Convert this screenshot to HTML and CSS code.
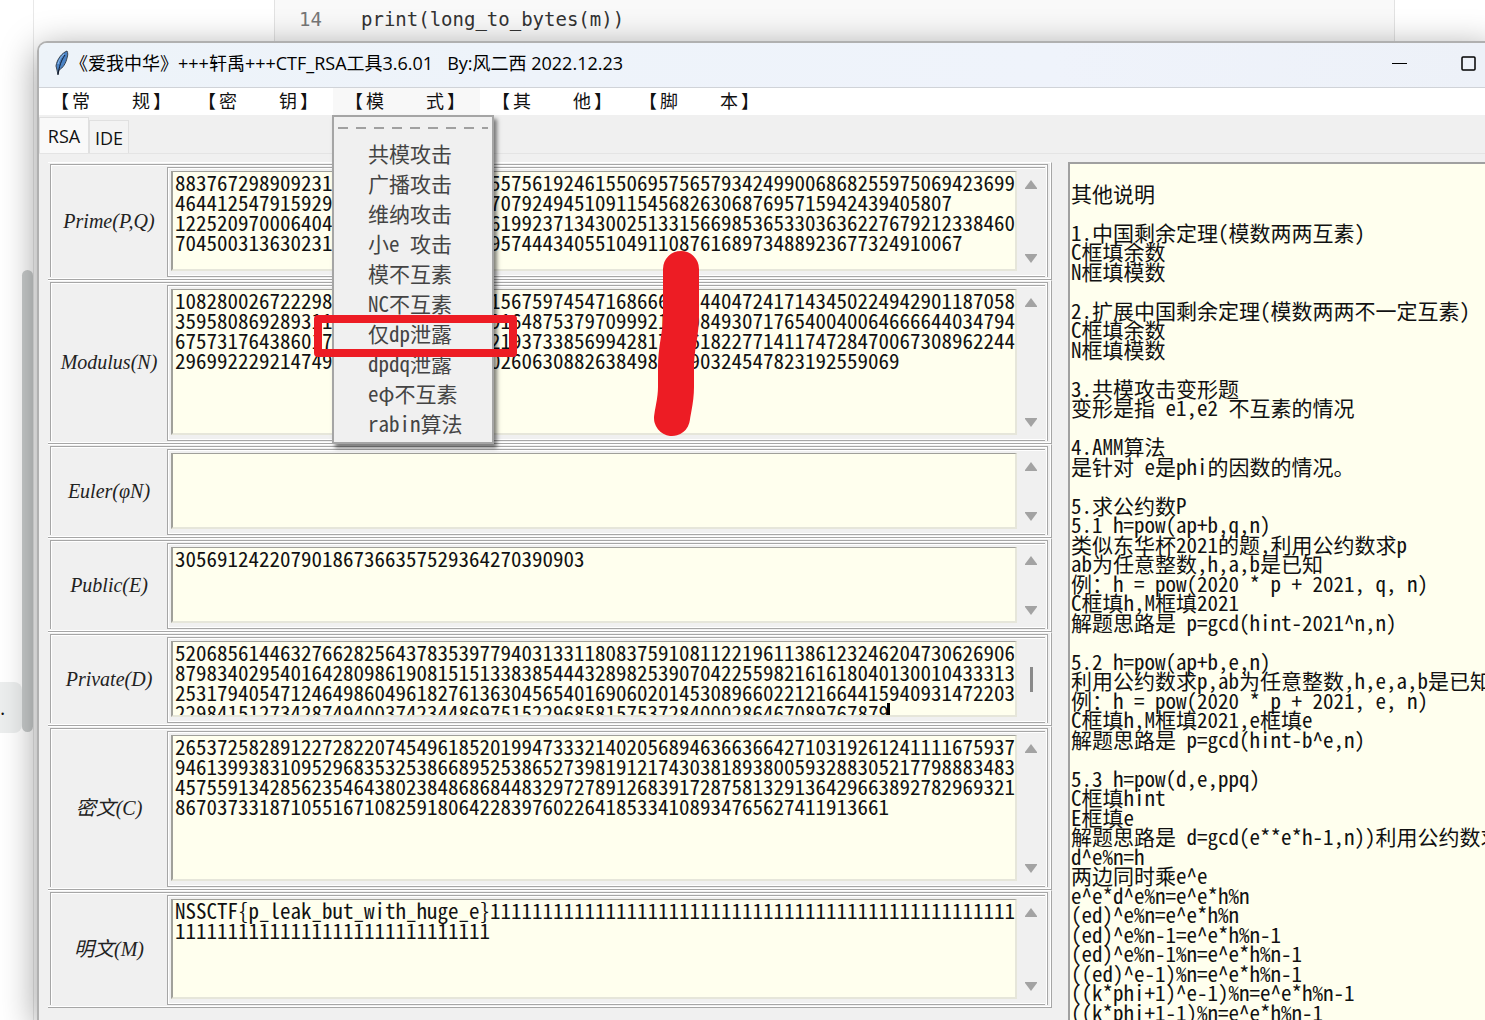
FILE: index.html
```html
<!DOCTYPE html>
<html lang="zh-CN">
<head>
<meta charset="utf-8">
<title>CTF_RSA工具3.6.01</title>
<link rel="stylesheet" href="styles.css">
</head>
<body>
<div class="backdrop">
  <div class="rail"><span class="rail-chip">.</span><span class="rail-thumb"></span></div>
  <pre class="code"><span class="code-no">14</span><code>print(long_to_bytes(m))</code></pre>
</div>

<main class="window">
  <header class="titlebar">
    <svg class="feather" viewBox="0 0 16 26" aria-hidden="true">
      <path d="M13 1C8 3 3 9 2 16l1 4 1 5 1-5c4-2 7-7 8-12 1-3 1-5 0-7z" fill="#4a82c4" stroke="#39434f"/>
      <path d="M11 5C9 8 6 12 4 24" fill="none" stroke="#10192c"/>
      <path d="M10 4C7 7 5 10 4 14" fill="none" stroke="#8fbcec"/>
    </svg>
    <h1 class="title">《爱我中华》+++轩禹+++CTF_RSA工具3.6.01 &nbsp; By:风二西 2022.12.23</h1>
    <div class="controls">
      <button type="button" aria-label="最小化"><svg viewBox="0 0 16 16"><path d="M0 8.500h15" stroke="#000" fill="none"/></svg></button>
      <button type="button" aria-label="最大化"><svg viewBox="0 0 16 16"><rect x="1" y="2" width="13" height="13" rx="1" stroke="#000" stroke-width="1.500" fill="none"/></svg></button>
    </div>
  </header>

  <nav class="menubar">
    <button type="button"><span>【</span><span class="word"><span>常</span><span>规</span></span><span>】</span></button>
    <button type="button"><span>【</span><span class="word"><span>密</span><span>钥</span></span><span>】</span></button>
    <div class="menu-host">
      <button type="button" class="open" aria-expanded="true"><span>【</span><span class="word"><span>模</span><span>式</span></span><span>】</span></button>
      <div class="dropdown">
        <div class="tearoff"></div>
        <button type="button">共模攻击</button>
        <button type="button">广播攻击</button>
        <button type="button">维纳攻击</button>
        <button type="button">小e 攻击</button>
        <button type="button">模不互素</button>
        <button type="button">NC不互素</button>
        <button type="button">仅dp泄露</button>
        <button type="button">dpdq泄露</button>
        <button type="button">eφ不互素</button>
        <button type="button">rabin算法</button>
      </div>
    </div>
    <button type="button"><span>【</span><span class="word"><span>其</span><span>他</span></span><span>】</span></button>
    <button type="button"><span>【</span><span class="word"><span>脚</span><span>本</span></span><span>】</span></button>
  </nav>

  <div class="tabs">
    <button type="button" class="tab active">RSA</button>
    <button type="button" class="tab">IDE</button>
  </div>

  <div class="content">
    <form class="fields">
      <div class="row">
        <div class="body">
          <label for="p">Prime(P,Q)</label>
          <div class="frame">
            <textarea id="p" class="mid" spellcheck="false">88376729890923147301295836401755756192461550695756579342499006868255975069423699
46441254791592983016472951038470792494510911545682630687695715942439405807
12252097000640429583710462957361992371343002513315669853653303636227679212338460
704500313630231640182957301846957444340551049110876168973488923677324910067</textarea>
            <div class="scroll"><svg viewBox="0 0 12 9"><path d="M6 0l6 8v1H0V8z"/></svg><svg viewBox="0 0 12 9"><path d="M6 9l6-8V0H0v1z"/></svg></div>
          </div>
        </div>
      </div>
      <div class="row">
        <div class="body">
          <label for="n">Modulus(N)</label>
          <div class="frame">
            <textarea id="n" class="tall" spellcheck="false">10828002672229837401956283047115675974547168666203440472417143450224942901187058
35958086928931157302846193750291648753797099921230849307176540040064666644034794
67573176438601729401857360284721937338569942817306182277141174728470067308962244
296992229214749501836274950138026063088263849815790324547823192559069</textarea>
            <div class="scroll"><svg viewBox="0 0 12 9"><path d="M6 0l6 8v1H0V8z"/></svg><svg viewBox="0 0 12 9"><path d="M6 9l6-8V0H0v1z"/></svg></div>
          </div>
        </div>
      </div>
      <div class="row">
        <div class="body">
          <label for="phi">Euler(φN)</label>
          <div class="frame">
            <textarea id="phi" class="short" spellcheck="false"></textarea>
            <div class="scroll"><svg viewBox="0 0 12 9"><path d="M6 0l6 8v1H0V8z"/></svg><svg viewBox="0 0 12 9"><path d="M6 9l6-8V0H0v1z"/></svg></div>
          </div>
        </div>
      </div>
      <div class="row">
        <div class="body">
          <label for="e">Public(E)</label>
          <div class="frame">
            <textarea id="e" class="short" spellcheck="false">305691242207901867366357529364270390903</textarea>
            <div class="scroll"><svg viewBox="0 0 12 9"><path d="M6 0l6 8v1H0V8z"/></svg><svg viewBox="0 0 12 9"><path d="M6 9l6-8V0H0v1z"/></svg></div>
          </div>
        </div>
      </div>
      <div class="row">
        <div class="body">
          <label for="d">Private(D)</label>
          <div class="frame">
            <textarea id="d" class="short" spellcheck="false">52068561446327662825643783539779403133118083759108112219611386123246204730626906
87983402954016428098619081515133838544432898253907042255982161618040130010433313
25317940547124649860496182761363045654016906020145308966022121664415940931472203
22984151273428749400374234486975152296858157537284000286467089767879</textarea>
            <span class="caret"></span>
            <div class="scroll dragging"><span class="thumb"></span></div>
          </div>
        </div>
      </div>
      <div class="row">
        <div class="body">
          <label for="c">密文(C)</label>
          <div class="frame">
            <textarea id="c" class="tall" spellcheck="false">26537258289122728220745496185201994733321402056894636636642710319261241111675937
94613993831095296835325386689525386527398191217430381893800593288305217798883483
45755913428562354643802384868684483297278912683917287581329136429663892782969321
86703733187105516710825918064228397602264185334108934765627411913661</textarea>
            <div class="scroll"><svg viewBox="0 0 12 9"><path d="M6 0l6 8v1H0V8z"/></svg><svg viewBox="0 0 12 9"><path d="M6 9l6-8V0H0v1z"/></svg></div>
          </div>
        </div>
      </div>
      <div class="row">
        <div class="body">
          <label for="m">明文(M)</label>
          <div class="frame">
            <textarea id="m" class="mid" spellcheck="false">NSSCTF{p_leak_but_with_huge_e}11111111111111111111111111111111111111111111111111
111111111111111111111111111111</textarea>
            <div class="scroll"><svg viewBox="0 0 12 9"><path d="M6 0l6 8v1H0V8z"/></svg><svg viewBox="0 0 12 9"><path d="M6 9l6-8V0H0v1z"/></svg></div>
          </div>
        </div>
      </div>
    </form>

    <section class="notes">
      <p></p>
      <p>其他说明</p>
      <p></p>
      <p>1.中国剩余定理(模数两两互素)</p>
      <p>C框填余数</p>
      <p>N框填模数</p>
      <p></p>
      <p>2.扩展中国剩余定理(模数两两不一定互素)</p>
      <p>C框填余数</p>
      <p>N框填模数</p>
      <p></p>
      <p>3.共模攻击变形题</p>
      <p>变形是指 e1,e2 不互素的情况</p>
      <p></p>
      <p>4.AMM算法</p>
      <p>是针对 e是phi的因数的情况。</p>
      <p></p>
      <p>5.求公约数P</p>
      <p>5.1 h=pow(ap+b,q,n)</p>
      <p>类似东华杯2021的题,利用公约数求p</p>
      <p>ab为任意整数,h,a,b是已知</p>
      <p>例：h = pow(2020 * p + 2021, q, n)</p>
      <p>C框填h,M框填2021</p>
      <p>解题思路是 p=gcd(hint-2021^n,n)</p>
      <p></p>
      <p>5.2 h=pow(ap+b,e,n)</p>
      <p>利用公约数求p,ab为任意整数,h,e,a,b是已知</p>
      <p>例：h = pow(2020 * p + 2021, e, n)</p>
      <p>C框填h,M框填2021,e框填e</p>
      <p>解题思路是 p=gcd(hint-b^e,n)</p>
      <p></p>
      <p>5.3 h=pow(d,e,ppq)</p>
      <p>C框填hint</p>
      <p>E框填e</p>
      <p>解题思路是 d=gcd(e**e*h-1,n))利用公约数求</p>
      <p>d^e%n=h</p>
      <p>两边同时乘e^e</p>
      <p>e^e*d^e%n=e^e*h%n</p>
      <p>(ed)^e%n=e^e*h%n</p>
      <p>(ed)^e%n-1=e^e*h%n-1</p>
      <p>(ed)^e%n-1%n=e^e*h%n-1</p>
      <p>((ed)^e-1)%n=e^e*h%n-1</p>
      <p>((k*phi+1)^e-1)%n=e^e*h%n-1</p>
      <p>((k*phi+1-1)%n=e^e*h%n-1</p>
    </section>
  </div>
</main>

<div class="mark-box"></div>
<svg class="mark-stroke" viewBox="0 0 50 190" aria-hidden="true">
  <path d="M31 20V66C31 88 26 96 26 118V138C26 152 23 160 22 169" fill="none" stroke="#ed1c24" stroke-width="36" stroke-linecap="round"/>
</svg>
</body>
</html>
```
FILE: styles.css
```css
* { box-sizing: border-box; }

html, body { height: 100%; }

body {
  position: relative;
  margin: 0;
  overflow: hidden;
  background: #fff;
  color: #111;
  font-family: "Open Sans", "Noto Sans CJK SC", sans-serif;
}

button {
  margin: 0;
  padding: 0;
  border: 0;
  background: none;
  color: inherit;
  font: inherit;
}

/* page behind the window */
.backdrop {
  position: absolute;
  inset: 0;
  display: flex;
}

.rail {
  position: relative;
  width: 34px;
  border-right: 1px solid #e8e8e8;
}

.rail-chip {
  position: absolute;
  top: 682px;
  left: 0;
  width: 22px;
  height: 51px;
  border-radius: 0 8px 8px 0;
  background: #eceeee;
  font-size: 20px;
  line-height: 52px;
}

.rail-thumb {
  position: absolute;
  top: 270px;
  right: 0;
  width: 11px;
  height: 462px;
  border-radius: 6px;
  background: #c9cccc;
}

.code {
  display: flex;
  flex: 1;
  margin: 0 90px 0 240px;
  padding: 7px 24px;
  border: solid #e2e2e2;
  border-width: 0 1px;
  background: #f9f9f9;
  color: #333;
  font: 19px/24px "DejaVu Sans Mono", monospace;
}

.code code { font: inherit; }

.code-no {
  width: 62px;
  color: #777;
}

/* window */
.window {
  position: relative;
  display: flex;
  flex-direction: column;
  height: calc(100% - 41px);
  margin: 41px -10px 0 37px;
  padding-right: 10px;
  border: solid #b0b0b0;
  border-width: 2px 0 0 2px;
  border-radius: 10px 0 0 0;
  background: #f0f0f0;
  box-shadow: 0 8px 36px rgba(0, 0, 0, .4);
}

.titlebar {
  display: flex;
  flex: none;
  align-items: center;
  height: 45px;
  padding: 0 0 4px 15px;
  border-bottom: 1px solid #d0d3d8;
  border-radius: 8px 0 0 0;
  background: linear-gradient(90deg, #edf3f9, #eff3fb 70%, #edf1f8);
}

.feather {
  width: 16px;
  height: 26px;
}

.title {
  margin: 0;
  flex: 1;
  color: #000;
  font-size: 18px;
  font-weight: 400;
  line-height: 24px;
  white-space: nowrap;
}

.controls {
  display: flex;
  gap: 53px;
  padding-right: 8px;
}

.controls svg {
  display: block;
  width: 16px;
  height: 16px;
}

.menubar {
  display: flex;
  flex: none;
  height: 27px;
  background: #fff;
  font-family: "Noto Sans CJK SC", sans-serif;
  font-size: 18px;
  line-height: 24px;
}

.menubar > button,
.open {
  display: flex;
  align-items: flex-start;
  gap: 3px;
  width: 147px;
  height: 27px;
  padding-left: 12px;
}

.open { background: #f8f8f8; }

.word {
  display: flex;
  justify-content: space-between;
  width: 78px;
}

.menu-host {
  position: relative;
  z-index: 2;
}

.dropdown {
  position: absolute;
  top: 27px;
  left: -1px;
  display: flex;
  flex-direction: column;
  width: 162px;
  height: 329px;
  padding: 10px 4px 0;
  border: 2px solid #a5a5a5;
  background: #f0f0f0;
  box-shadow: 3px 4px 4px rgba(0, 0, 0, .5);
}

.dropdown button {
  height: 30px;
  padding-left: 30px;
  color: #444;
  font: 300 21px/30px "Noto Sans Mono CJK SC", "Noto Sans CJK SC", sans-serif;
  font-feature-settings: "hwid";
  text-align: left;
  white-space: pre;
}

.tearoff {
  height: 11px;
  background: repeating-linear-gradient(90deg, #a0a0a0 0 10px, transparent 10px 18px) 0 0 / 100% 2px no-repeat;
}

.tabs {
  display: flex;
  flex: none;
  align-items: flex-end;
  height: 39px;
  border-bottom: 1px solid #e4e4e4;
  font-size: 18px;
  line-height: 34px;
}

.tab {
  width: 40px;
  height: 33px;
  border: 1px solid #e0e0e0;
  border-bottom: 0;
  background: #f3f3f3;
}

.tab.active {
  width: 50px;
  height: 36px;
  background: #f9f9f9;
}

.content {
  display: grid;
  flex: 1;
  grid-template-columns: 1004fr 417fr;
  gap: 16px;
  min-height: 0;
  padding: 8px 0 0 9px;
}

/* field rows */
.row {
  padding: 1px 3px 2px 2px;
  border: solid #a6a6a6;
  border-width: 0 1px 1px 0;
  border-top: 1px solid #fff;
  box-shadow: inset -1px -1px #fff;
}

.body {
  display: flex;
  padding: 2px 0 0;
  border: solid #a6a6a6;
  border-width: 1px 1px 0;
  box-shadow: inset 1px 1px #fff, inset -1px 0 #fff;
}

.body label {
  display: flex;
  align-items: center;
  justify-content: center;
  width: 116px;
  padding-bottom: 2px;
  color: #222;
  font: italic 20px/24px "Liberation Serif", "Noto Sans CJK SC", serif;
}

.frame {
  position: relative;
  display: flex;
  flex: 1;
  margin-right: 2px;
  padding: 3px 0 5px 3px;
  border: solid #a6a6a6;
  border-width: 1px 0 1px 1px;
  box-shadow: inset 1px 1px #fff, inset 0 -1px #fff;
}

textarea {
  flex: 1;
  min-width: 0;
  margin: 0;
  padding: 0 0 0 2px;
  overflow: hidden;
  resize: none;
  border: solid;
  border-width: 1px 2px 2px;
  border-color: #a0a09a #e6e6da #e6e6da #a0a09a;
  border-radius: 0;
  outline: 0;
  background: #ffffee;
  color: #111;
  font: 21px/20px "Noto Sans Mono CJK SC", "Noto Sans CJK SC", monospace;
  font-feature-settings: "hwid";
  white-space: pre;
}

.short { height: 76px; }
.mid { height: 100px; }
.tall { height: 146px; }

.scroll {
  display: flex;
  flex-direction: column;
  align-items: center;
  justify-content: space-between;
  width: 28px;
  padding: 9px 0 8px;
}

.scroll svg {
  width: 12px;
  height: 9px;
  fill: #a3a3a3;
}

.scroll.dragging { justify-content: center; }

.thumb {
  width: 3px;
  height: 25px;
  background: #8a8a8a;
}

.caret {
  position: absolute;
  bottom: 7px;
  left: 719px;
  width: 3px;
  height: 12px;
  background: #000;
}

.notes {
  min-width: 0;
  overflow: hidden;
  padding-left: 1px;
  border: solid #a0a0a0;
  border-width: 2px 0 0 2px;
  background: #ffffee;
  font-family: "Noto Sans Mono CJK SC", "Noto Sans CJK SC", monospace;
  font-feature-settings: "hwid";
  font-size: 21px;
}

.notes p {
  height: 20px;
  margin: 0;
  line-height: 18px;
  white-space: pre;
}

.notes p:nth-child(even) { height: 19px; }

/* red pen annotations */
.mark-box {
  position: absolute;
  z-index: 3;
  top: 315px;
  left: 314px;
  width: 203px;
  height: 42px;
  border: 8px solid #ed1c24;
  border-radius: 4px;
}

.mark-stroke {
  position: absolute;
  top: 249px;
  left: 650px;
  width: 50px;
  height: 190px;
}
```
